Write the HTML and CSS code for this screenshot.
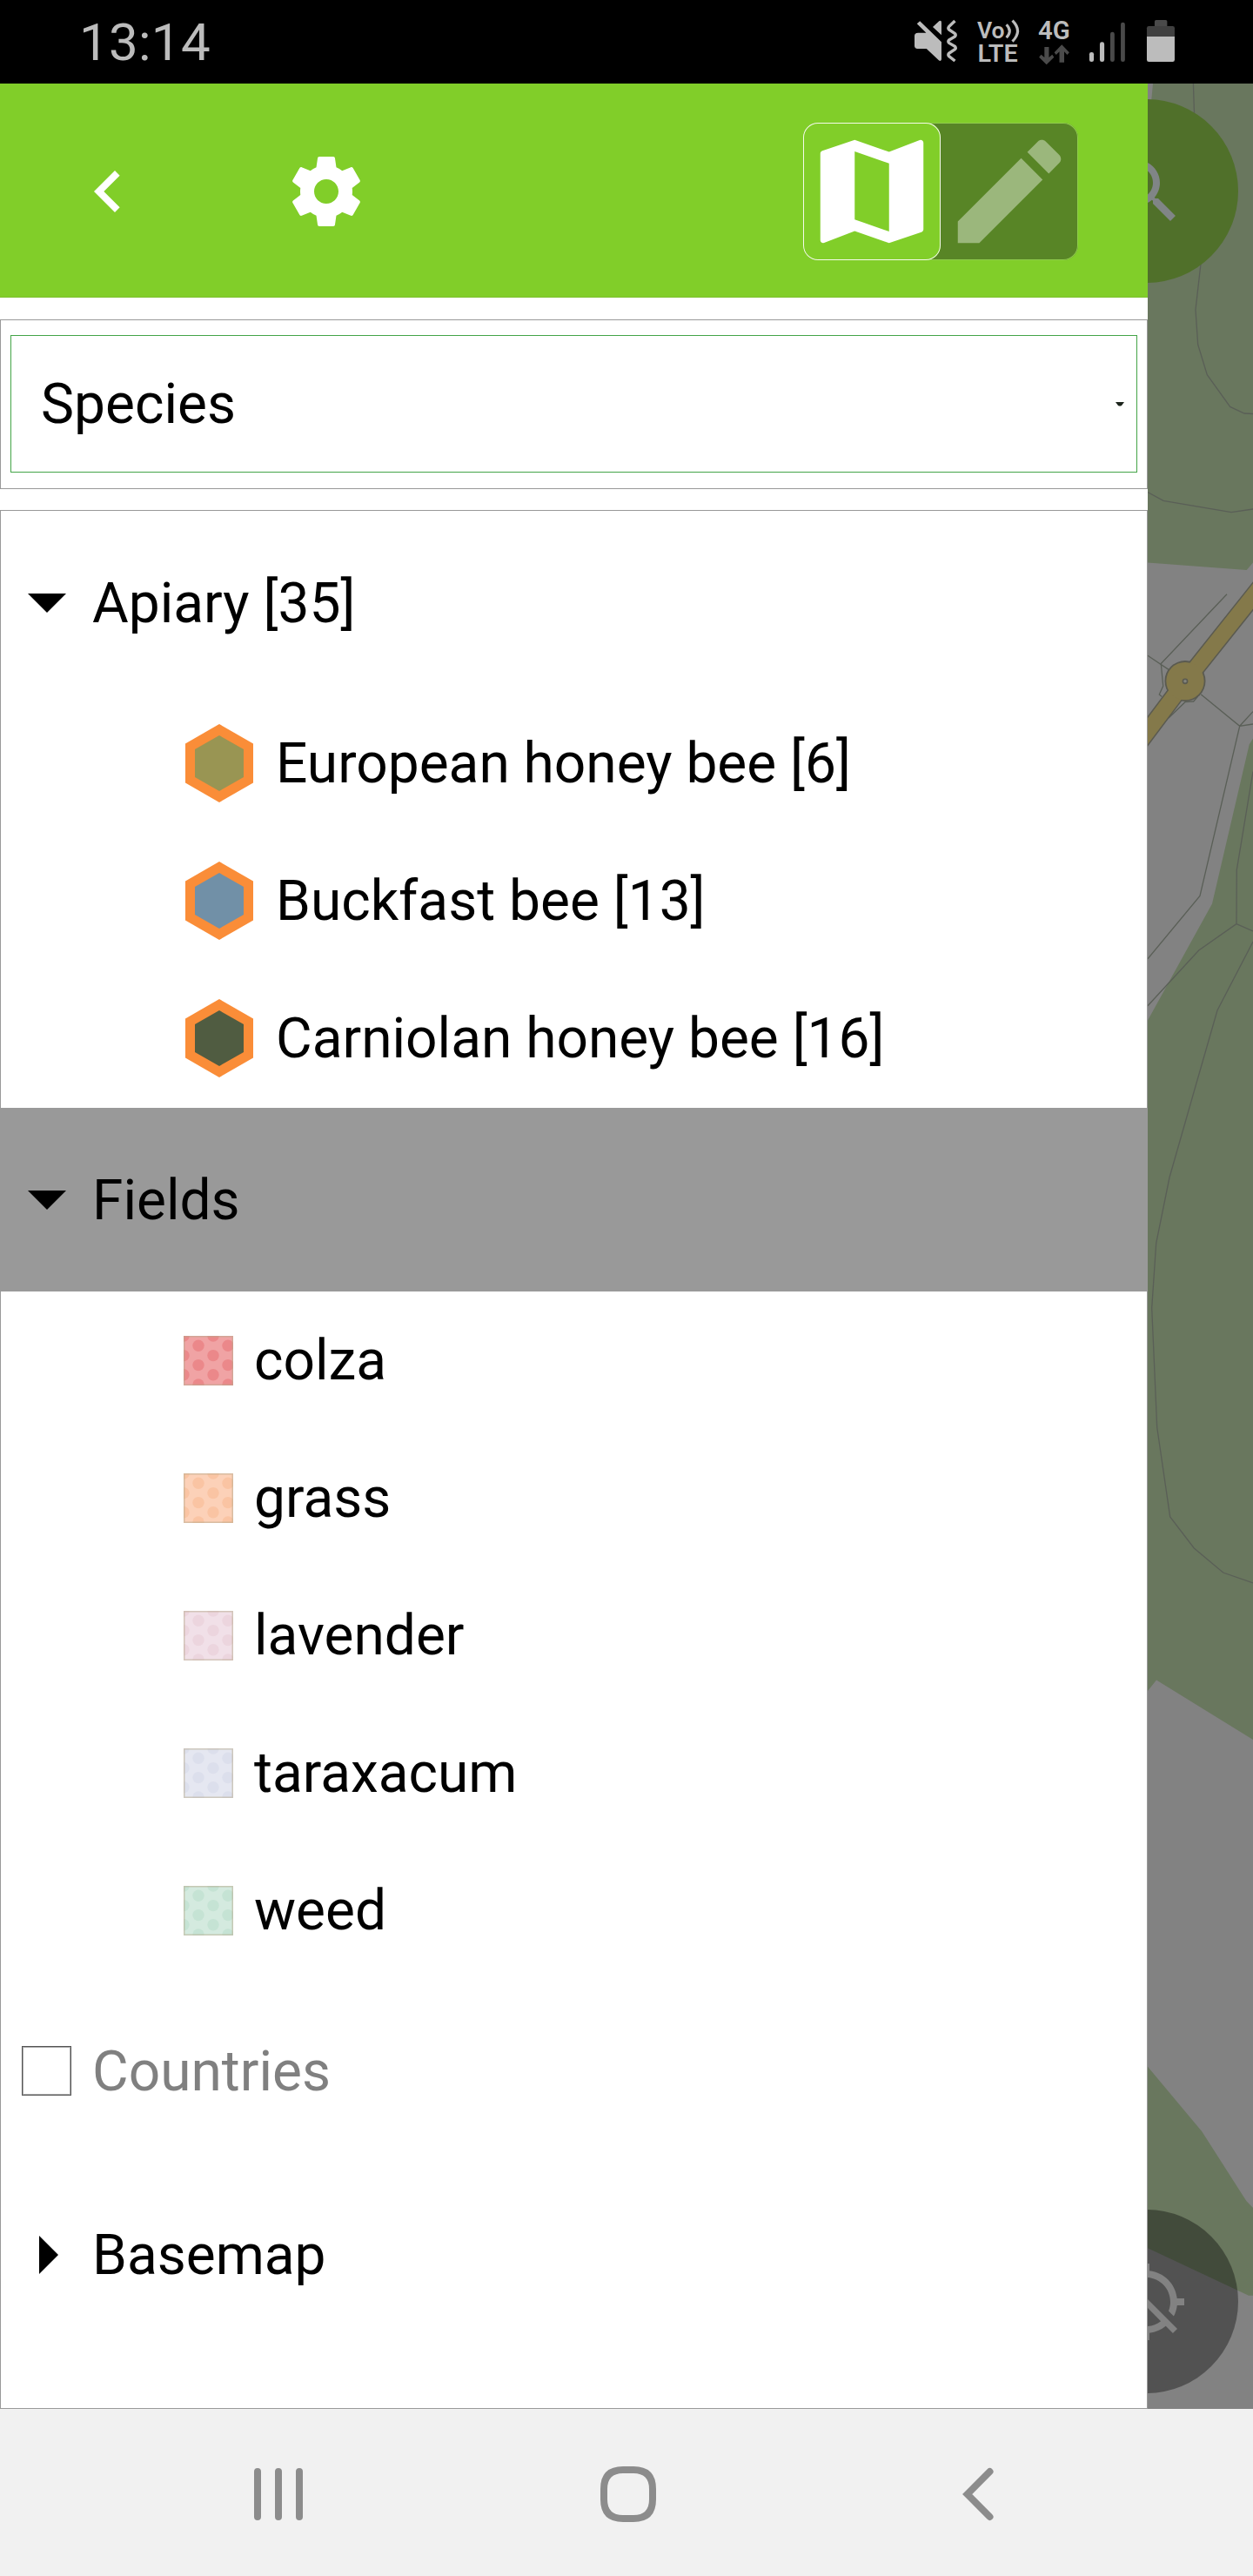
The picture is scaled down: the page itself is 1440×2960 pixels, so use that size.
FILE: index.html
```html
<!DOCTYPE html>
<html lang="en">
<head>
<meta charset="utf-8">
<title>Layers</title>
<link rel="stylesheet" href="styles.css">
</head>
<body>
<header class="status">
  <span class="clock">13:14</span>
  <svg class="status-icons" viewBox="438 0 872 288" preserveAspectRatio="none">
    <g fill="#bcbcbc">
      <path d="M446 82L456 73L528 145V205Q526 213 519 208L478 168H448Q438 167 438 158V124Q438 113 450 113H477zM499 93L520 73Q528 68 528 78V121z"/>
      <path d="M573 72L553 92Q549 97 553 102L572 115Q578 120 573 126L553 138Q549 143 553 148L573 160Q578 166 573 170L553 184Q549 189 553 194L573 210" fill="none" stroke="#bcbcbc" stroke-width="10"/>
      <text x="647" y="131" font-size="80" font-weight="600" textLength="92" lengthAdjust="spacingAndGlyphs">Vo</text>
      <text x="649" y="212" font-size="84" font-weight="600" textLength="134" lengthAdjust="spacingAndGlyphs">LTE</text>
      <path d="M745 85Q766 107 745 130M765 71Q800 107 765 143" fill="none" stroke="#bcbcbc" stroke-width="9"/>
      <text x="851" y="136" font-size="87" font-weight="600" textLength="107" lengthAdjust="spacingAndGlyphs">4G</text>
      <rect x="1022" y="180" width="15" height="33" rx="7"/>
      <rect x="1057" y="145" width="15" height="68" rx="7"/>
      <path d="M1214 126H1307V206Q1307 213 1300 213H1221Q1214 213 1214 206z"/>
    </g>
    <g fill="#4a4a4a">
      <path d="M872 162H887V198L898 188L904 197L879 223L854 197L861 188L872 198zM922 215V178L911 189L905 181L930 154L955 181L948 189L938 178V215z"/>
      <rect x="1092" y="110" width="14" height="103" rx="7"/>
      <rect x="1127" y="77" width="14" height="136" rx="7"/>
      <path d="M1240 90V74Q1240 69 1245 69H1277Q1282 69 1282 74V90z"/>
      <path d="M1214 126V97Q1214 90 1221 90H1300Q1307 90 1307 97V126z" fill="#404040"/>
    </g>
  </svg>
</header>

<main class="screen">
  <section class="drawer">
    <div class="toolbar">
      <svg class="icon" viewBox="0 0 24 24"><path d="M15.41 7.41L14 6l-6 6 6 6 1.41-1.41L10.83 12z"/></svg>
      <svg class="icon gear" viewBox="0 0 24 24"><path d="M19.43 12.98c.04-.32.07-.64.07-.98s-.03-.66-.07-.98l2.11-1.65c.19-.15.24-.42.12-.64l-2-3.46c-.12-.22-.39-.3-.61-.22l-2.49 1c-.52-.4-1.08-.73-1.69-.98l-.38-2.65C14.46 2.18 14.25 2 14 2h-4c-.25 0-.46.18-.49.42l-.38 2.65c-.61.25-1.17.59-1.69.98l-2.49-1c-.23-.09-.49 0-.61.22l-2 3.46c-.13.22-.07.49.12.64l2.11 1.65c-.04.32-.07.65-.07.98s.03.66.07.98l-2.11 1.65c-.19.15-.24.42-.12.64l2 3.46c.12.22.39.3.61.22l2.49-1c.52.4 1.08.73 1.69.98l.38 2.65c.03.24.24.42.49.42h4c.25 0 .46-.18.49-.42l.38-2.65c.61-.25 1.17-.59 1.69-.98l2.49 1c.23.09.49 0 .61-.22l2-3.46c.12-.22.07-.49-.12-.64l-2.11-1.65zM12 15.5c-1.93 0-3.5-1.57-3.5-3.5s1.57-3.5 3.5-3.5 3.5 1.57 3.5 3.5-1.57 3.5-3.5 3.5z"/></svg>
      <div class="modes">
        <div class="mode mode-on"><svg viewBox="0 0 24 24"><path d="M20.5 3l-.16.03L15 5.1 9 3 3.36 4.9c-.21.07-.36.25-.36.48V20.5c0 .28.22.5.5.5l.16-.03L9 18.9l6 2.1 5.64-1.9c.21-.07.36-.25.36-.48V3.5c0-.28-.22-.5-.5-.5zM15 19l-6-2.11V5l6 2.11V19z"/></svg></div>
        <div class="mode mode-off"><svg viewBox="0 0 24 24"><path d="M3 17.25V21h3.75L17.81 9.94l-3.75-3.75L3 17.25zM20.71 7.04c.39-.39.39-1.02 0-1.41l-2.34-2.34c-.39-.39-1.02-.39-1.41 0l-1.83 1.83 3.75 3.75 1.83-1.83z"/></svg></div>
      </div>
    </div>

    <div class="filter">
      <div class="select">
        <span class="label">Species</span>
        <svg class="caret" viewBox="0 0 10 5"><path d="M0 0H10L7 4Q5 5 3 4z"/></svg>
      </div>
    </div>

    <div class="tree">
      <div class="row">
        <span class="mark"><svg width="44" height="22" viewBox="0 0 44 22"><path d="M0 0H44L22 22z"/></svg></span>
        <span class="label">Apiary [35]</span>
      </div>
      <div class="children species">
        <div class="item"><svg class="hex" viewBox="0 0 78 90"><path class="rim" d="M39 0L78 22.5V67.5L39 90L0 67.5V22.5z"/><path fill="#999553" d="M39 13L67 29V61L39 77L11 61V29z"/></svg><span class="label">European honey bee [6]</span></div>
        <div class="item"><svg class="hex" viewBox="0 0 78 90"><path class="rim" d="M39 0L78 22.5V67.5L39 90L0 67.5V22.5z"/><path fill="#7190a7" d="M39 13L67 29V61L39 77L11 61V29z"/></svg><span class="label">Buckfast bee [13]</span></div>
        <div class="item"><svg class="hex" viewBox="0 0 78 90"><path class="rim" d="M39 0L78 22.5V67.5L39 90L0 67.5V22.5z"/><path fill="#505c41" d="M39 13L67 29V61L39 77L11 61V29z"/></svg><span class="label">Carniolan honey bee [16]</span></div>
      </div>
      <div class="row selected">
        <span class="mark"><svg width="44" height="22" viewBox="0 0 44 22"><path d="M0 0H44L22 22z"/></svg></span>
        <span class="label">Fields</span>
      </div>
      <svg class="defs" width="0" height="0">
        <defs>
          <g id="dots">
            <circle cx="0" cy="0" r="6.7"/><circle cx="34" cy="0" r="6.7"/>
            <circle cx="17" cy="11.2" r="6.7"/><circle cx="51" cy="11.2" r="6.7"/>
            <circle cx="0" cy="22.6" r="6.7"/><circle cx="34" cy="22.6" r="6.7"/>
            <circle cx="17" cy="33.6" r="6.7"/><circle cx="51" cy="33.6" r="6.7"/>
            <circle cx="0" cy="44.8" r="6.7"/><circle cx="34" cy="44.8" r="6.7"/>
            <circle cx="17" cy="56" r="6.7"/><circle cx="51" cy="56" r="6.7"/>
          </g>
        </defs>
      </svg>
      <div class="children fields">
        <div class="item"><svg class="swatch colza" viewBox="0 0 57 57"><use href="#dots"/><rect x=".75" y=".75" width="55.5" height="55.5"/></svg><span class="label">colza</span></div>
        <div class="item"><svg class="swatch grass" viewBox="0 0 57 57"><use href="#dots"/><rect x=".75" y=".75" width="55.5" height="55.5"/></svg><span class="label">grass</span></div>
        <div class="item"><svg class="swatch lavender" viewBox="0 0 57 57"><use href="#dots"/><rect x=".75" y=".75" width="55.5" height="55.5"/></svg><span class="label">lavender</span></div>
        <div class="item"><svg class="swatch taraxacum" viewBox="0 0 57 57"><use href="#dots"/><rect x=".75" y=".75" width="55.5" height="55.5"/></svg><span class="label">taraxacum</span></div>
        <div class="item"><svg class="swatch weed" viewBox="0 0 57 57"><use href="#dots"/><rect x=".75" y=".75" width="55.5" height="55.5"/></svg><span class="label">weed</span></div>
      </div>
      <div class="row off">
        <span class="mark"><span class="checkbox"></span></span>
        <span class="label">Countries</span>
      </div>
      <div class="row">
        <span class="mark"><svg class="closed" width="22" height="44" viewBox="0 0 22 44"><path d="M0 0V44L22 22z"/></svg></span>
        <span class="label">Basemap</span>
      </div>
    </div>
  </section>

  <section class="map">
    <svg class="ground" viewBox="1319 96 121 2672">
      <g fill="#69775e">
        <path d="M1325 96H1440V646.5L1432.7 655L1319 646.5V160z"/>
        <path d="M1440 848.6L1435.7 855.5L1393 1038.6L1319 1172.4V1943L1329 1930.6L1440 1999z"/>
        <path d="M1319 2374.7L1381.3 2449.3L1432.3 2529L1440 2537V2637.7H1435L1319 2583.3z"/>
      </g>
      <g class="paths">
        <path d="M1371.4 96L1372.5 130L1382 250L1380 303L1374 356L1376.7 396L1387.3 430.7L1413.7 467.4L1430 475L1440 475.5"/>
        <path d="M1319 565.6L1337 575.4L1415 588.6L1440 585"/>
        <path d="M1410 682.7L1334.3 762.5L1336.7 788.3L1332.3 798L1335.3 800.4"/>
        <path d="M1319 753.3L1343 769.4"/>
        <path d="M1343 825L1362 806.7L1371.7 806L1376.7 800"/>
        <path d="M1380.3 798L1424.7 834.3L1440 817.6M1440 832L1424.7 834.3L1379 1029.4L1319 1101.8"/>
        <path d="M1440 886.5L1421.3 999.6L1421 1061.6L1377.7 1092L1319 1155.7M1421 1061.6L1440 1070"/>
        <path d="M1440 1082L1399 1161L1376.3 1240L1344 1353L1328.7 1428.6L1323.7 1503L1329.7 1640L1344.7 1742.9L1372.3 1779L1405.7 1807L1440 1819"/>
      </g>
      <path d="M1309 853.5L1362 783L1450 672.5" fill="none" stroke="#5a5a50" stroke-width="21"/>
      <circle cx="1362" cy="782.6" r="23.5" fill="#5a5a50"/>
      <path d="M1309 853.5L1362 783L1450 672.5" fill="none" stroke="#84794a" stroke-width="18"/>
      <circle cx="1362" cy="782.6" r="21.7" fill="#84794a"/>
      <circle cx="1362" cy="782.8" r="2.6" fill="#84847c" stroke="#5a5a50" stroke-width="1.6"/>
    </svg>
    <div class="fab fab-search"><svg viewBox="0 0 24 24"><path d="M15.5 14h-.79l-.28-.27C15.41 12.59 16 11.11 16 9.5 16 5.91 13.09 3 9.5 3S3 5.91 3 9.5 5.91 16 9.5 16c1.61 0 3.09-.59 4.23-1.57l.27.28v.79l5 4.99L20.49 19l-4.99-5zm-6 0C7.01 14 5 11.99 5 9.5S7.01 5 9.5 5 14 7.01 14 9.5 11.99 14 9.5 14z"/></svg></div>
    <div class="fab fab-locate"><svg viewBox="0 0 24 24"><path d="M20.94 11c-.46-4.17-3.77-7.48-7.94-7.94V1h-2v2.06c-1.13.12-2.19.46-3.16.97l1.5 1.5C10.16 5.19 11.06 5 12 5c3.87 0 7 3.13 7 7 0 .94-.19 1.84-.52 2.65l1.5 1.5c.5-.96.84-2.02.97-3.15H23v-2h-2.06zM3 4.27l2.04 2.04C3.97 7.62 3.25 9.23 3.06 11H1v2h2.06c.46 4.17 3.77 7.48 7.94 7.94V23h2v-2.06c1.77-.2 3.38-.91 4.69-1.98L19.73 21 21 19.73 4.27 3 3 4.27zm13.27 13.27C15.09 18.45 13.61 19 12 19c-3.87 0-7-3.13-7-7 0-1.61.55-3.09 1.46-4.27l9.81 9.81z"/></svg></div>
  </section>
</main>

<nav class="navbar">
  <svg width="56" height="64" viewBox="0 0 56 64"><path d="M4 6V58M28 6V58M52 6V58"/></svg>
  <svg width="64" height="64" viewBox="0 0 64 64"><path d="M26 4H38Q60 4 60 26V38Q60 60 38 60H26Q4 60 4 38V26Q4 4 26 4z"/></svg>
  <svg class="back" width="36" height="64" viewBox="0 0 36 64"><path d="M31.5 6L5.7 32L31.5 58"/></svg>
</nav>
</body>
</html>
```
FILE: styles.css
```css
* { box-sizing: border-box; }

body {
  margin: 0;
  width: 1440px;
  height: 2960px;
  display: flex;
  flex-direction: column;
  overflow: hidden;
  background: #fff;
  color: #000;
  font-family: Roboto, "Liberation Sans", sans-serif;
  font-size: 64px;
  line-height: 76px;
}

svg { display: block; flex: none; }

.status {
  height: 96px;
  display: flex;
  justify-content: space-between;
  padding: 0 89px 0 91px;
  background: #000;
}
.clock { font-size: 60px; line-height: 98px; letter-spacing: .3px; color: #bcbcbc; }
.status-icons { width: 300px; height: 96px; overflow: visible; }

.screen { height: 2672px; display: flex; }
.drawer { width: 1319px; display: flex; flex-direction: column; }

.toolbar {
  height: 246px;
  display: flex;
  align-items: center;
  padding: 2px 80px 0 76px;
  background: #81ce29;
  border-bottom: 1px solid #7dc02f;
  fill: #fff;
}
.icon { width: 96px; height: 96px; }
.gear { margin-left: 155px; }
.modes {
  margin-left: auto;
  width: 316px;
  height: 158px;
  display: flex;
  border-radius: 17px;
  background: #588526;
  box-shadow: inset 0 0 0 1px #8fcb4c;
}
.mode { width: 158px; height: 158px; }
.mode svg { width: 158px; height: 158px; }
.mode-on { border-radius: 17px; background: #81ce29; box-shadow: inset 0 0 0 1px #f4fbe9; }
.mode-off { fill: #9bb77c; }

.filter {
  height: 195px;
  margin-top: 25px;
  padding: 17px 11px 18px;
  border: 1px solid #999;
}
.select {
  height: 158px;
  display: flex;
  align-items: center;
  justify-content: space-between;
  padding: 0 14px 0 34px;
  border: 1px solid #43a447;
}
.caret { width: 10px; height: 5px; fill: #1c241c; }

.tree {
  flex: 1;
  margin-top: 24px;
  border: 1px solid #999;
}
.label { padding-top: 2px; }
.row { height: 211px; display: flex; align-items: center; }
.mark { width: 105px; display: flex; padding-left: 31px; }
.off .mark { padding-left: 24px; }
.closed { margin-left: 13px; }
.selected { background: #999; margin-top: 1px; }
.off { color: #808080; }
.checkbox {
  width: 57px;
  height: 57px;
  border: 1px solid #555;
  box-shadow: inset 0 0 0 1px #a8a8a8;
}
.defs { position: absolute; }

.item { height: 158px; display: flex; align-items: center; }
.species .item { padding-left: 212px; gap: 26px; }
.fields .item { padding-left: 210px; gap: 24px; }
.hex { width: 78px; height: 90px; }
.rim { fill: #fa8d38; }
.swatch { width: 57px; height: 57px; }
.swatch rect { fill: none; stroke: #b5a88a; stroke-opacity: .5; stroke-width: 1.5; }
.colza { background: #f0a3a4; fill: #eb888a; }
.grass { background: #fcd1b8; fill: #fac4a3; }
.lavender { background: #f1e0e8; fill: #ecd5de; }
.taraxacum { background: #e5e7f1; fill: #dcdfec; }
.weed { background: #d4eadf; fill: #c5e3d4; }

.map { position: relative; flex: 1; overflow: hidden; background: #828282; }
.ground { width: 121px; height: 2672px; }
.paths { fill: none; stroke: #5a5f57; stroke-width: 1.3; }
.fab {
  position: absolute;
  left: -107.5px;
  width: 211px;
  height: 211px;
  border-radius: 50%;
  display: flex;
  align-items: center;
  justify-content: center;
}
.fab svg { width: 96px; height: 96px; }
.fab-search { top: 18px; background: #50702a; fill: #808586; }
.fab-locate { top: 2443px; background: rgba(0, 0, 0, .365); fill: #828282; }

.navbar {
  height: 192px;
  display: flex;
  align-items: center;
  gap: 342px;
  padding: 4px 298px 0 292px;
  background: #f1f1f1;
  fill: none;
  stroke: #8c8c8c;
  stroke-width: 8;
  stroke-linecap: round;
}
.back { margin-left: 10px; }
```
